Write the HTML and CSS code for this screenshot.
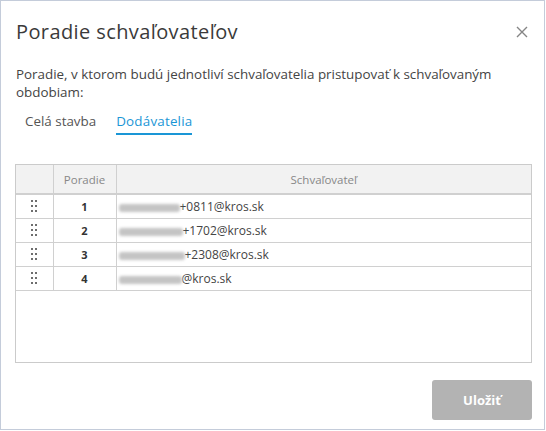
FILE: index.html
```html
<!DOCTYPE html>
<html lang="sk">
<head>
<meta charset="utf-8">
<title>Poradie schvaľovateľov</title>
<link rel="stylesheet" href="styles.css">
</head>
<body>
<div class="dialog">
  <div class="header">
    <h1 class="title">Poradie schvaľovateľov</h1>
    <button class="close" aria-label="Zavrieť">
      <svg width="12" height="12" viewBox="0 0 12 12"><path d="M1 1L11 11M11 1L1 11" stroke="#858585" stroke-width="1.4" fill="none"/></svg>
    </button>
  </div>
  <p class="desc">Poradie, v ktorom budú jednotliví schvaľovatelia pristupovať k schvaľovaným obdobiam:</p>
  <div class="tabs">
    <span class="tab">Celá stavba</span>
    <span class="tab active">Dodávatelia</span>
  </div>
  <div class="grid">
    <table>
      <thead>
        <tr><th class="c1"></th><th class="c2">Poradie</th><th class="c3">Schvaľovateľ</th></tr>
      </thead>
      <tbody>
        <tr><td class="c1"><svg class="drag" width="6" height="12" viewBox="0 0 6 12"><g fill="#6e6e6e"><rect x="0" y="0" width="2" height="2"/><rect x="4" y="0" width="2" height="2"/><rect x="0" y="5" width="2" height="2"/><rect x="4" y="5" width="2" height="2"/><rect x="0" y="10" width="2" height="2"/><rect x="4" y="10" width="2" height="2"/></g></svg></td><td class="c2">1</td><td class="c3"><span class="blur w1"></span>+0811@kros.sk</td></tr>
        <tr><td class="c1"><svg class="drag" width="6" height="12" viewBox="0 0 6 12"><g fill="#6e6e6e"><rect x="0" y="0" width="2" height="2"/><rect x="4" y="0" width="2" height="2"/><rect x="0" y="5" width="2" height="2"/><rect x="4" y="5" width="2" height="2"/><rect x="0" y="10" width="2" height="2"/><rect x="4" y="10" width="2" height="2"/></g></svg></td><td class="c2">2</td><td class="c3"><span class="blur w2"></span>+1702@kros.sk</td></tr>
        <tr><td class="c1"><svg class="drag" width="6" height="12" viewBox="0 0 6 12"><g fill="#6e6e6e"><rect x="0" y="0" width="2" height="2"/><rect x="4" y="0" width="2" height="2"/><rect x="0" y="5" width="2" height="2"/><rect x="4" y="5" width="2" height="2"/><rect x="0" y="10" width="2" height="2"/><rect x="4" y="10" width="2" height="2"/></g></svg></td><td class="c2">3</td><td class="c3"><span class="blur w3"></span>+2308@kros.sk</td></tr>
        <tr><td class="c1"><svg class="drag" width="6" height="12" viewBox="0 0 6 12"><g fill="#6e6e6e"><rect x="0" y="0" width="2" height="2"/><rect x="4" y="0" width="2" height="2"/><rect x="0" y="5" width="2" height="2"/><rect x="4" y="5" width="2" height="2"/><rect x="0" y="10" width="2" height="2"/><rect x="4" y="10" width="2" height="2"/></g></svg></td><td class="c2">4</td><td class="c3"><span class="blur w4"></span>@kros.sk</td></tr>
      </tbody>
    </table>
  </div>
  <div class="footer">
    <button class="save">Uložiť</button>
  </div>
</div>
</body>
</html>
```
FILE: styles.css
```css
* { box-sizing: border-box; }
html, body { margin: 0; padding: 0; background: #fff; }
body { font-family: "Open Sans", "Noto Sans", sans-serif; color: #444; }
.dialog {
  width: 545px;
  height: 430px;
  border: 1px solid #c4ccda;
  background: #fff;
  padding: 0 12px 0 14px;
  display: flex;
  flex-direction: column;
}
.header {
  display: flex;
  align-items: center;
  justify-content: space-between;
  padding-top: 16px;
  height: 46px;
}
.title {
  margin: 0 0 0 1px;
  font-size: 20px;
  font-weight: 400;
  color: #3a3a3a;
  line-height: 28px;
  letter-spacing: 0.4px;
}
.close {
  border: 0;
  background: none;
  padding: 0;
  margin-right: 4px;
  width: 12px;
  height: 12px;
  display: flex;
}
.desc {
  margin: 18px 0 0 1px;
  font-size: 13.4px;
  line-height: 18px;
  color: #444;
  width: 500px;
}
.tabs {
  display: flex;
  gap: 20px;
  margin-top: 10px;
  padding-left: 10px;
}
.tab {
  font-size: 13.4px;
  line-height: 20px;
  color: #555;
  padding-bottom: 2px;
  border-bottom: 2px solid transparent;
}
.tab.active {
  color: #1a96d6;
  border-bottom-color: #1a96d6;
  letter-spacing: 0.2px;
}
.grid {
  margin-top: 29px;
  height: 199px;
  border: 1px solid #cbcbcb;
}
table {
  width: 100%;
  border-collapse: collapse;
  font-size: 11.5px;
}
th {
  background: #f2f2f2;
  color: #888;
  font-weight: 400;
  height: 29px;
  border-bottom: 2px solid #d0d0d0;
  text-align: center;
  padding: 0;
}
td {
  height: 24px;
  border-bottom: 1px solid #d0d0d0;
  padding: 0;
  color: #444;
}
th + th, td + td { border-left: 1px solid #d0d0d0; }
.c1 { width: 37px; text-align: center; }
.c2 { width: 63px; text-align: center; font-weight: 700; color: #333; font-size: 11px; }
th.c2 { font-weight: 400; color: #888; font-size: 11.5px; }
td.c3 { padding-left: 2px; font-size: 12px; }
.drag { display: block; margin: 0 auto; }
.blur {
  display: inline-block;
  vertical-align: -1px;
  height: 8px;
  background: #c4c4c4;
  border-radius: 3px;
  filter: blur(1.4px);
}
.w1 { width: 61px; }
.w2 { width: 64px; }
.w3 { width: 66px; }
.w4 { width: 63px; }
.footer {
  display: flex;
  justify-content: flex-end;
  padding-top: 17px;
}
.save {
  width: 100px;
  height: 40px;
  border: 0;
  border-radius: 3px;
  background: #b3b3b3;
  color: #fff;
  font-family: "Open Sans", "Noto Sans", sans-serif;
  font-weight: 700;
  font-size: 13px;
}
```
